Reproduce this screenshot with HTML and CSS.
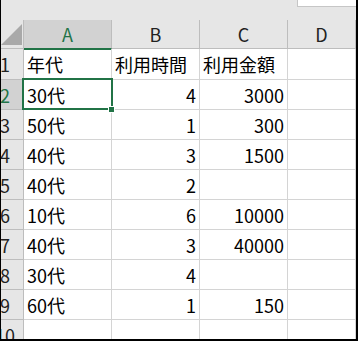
FILE: index.html
```html
<!DOCTYPE html>
<html lang="ja">
<head>
  <meta charset="UTF-8">
  <meta name="viewport" content="width=device-width, initial-scale=1.0">
  <title>利用データ</title>
  <link rel="stylesheet" href="styles.css">
</head>
<body>
  <div class="sheet">
    <div class="toolbar">
      <div class="namebox"></div>
    </div>
    <div class="grid">
      <div class="corner"><span class="corner-mark"></span></div>
      <div class="col-head is-active">A</div>
      <div class="col-head">B</div>
      <div class="col-head">C</div>
      <div class="col-head">D</div>

      <div class="row-head">1</div>
      <div class="cell">年代</div>
      <div class="cell">利用時間</div>
      <div class="cell">利用金額</div>
      <div class="cell"></div>

      <div class="row-head is-active">2</div>
      <div class="cell is-selected">30代</div>
      <div class="cell num">4</div>
      <div class="cell num">3000</div>
      <div class="cell"></div>

      <div class="row-head">3</div>
      <div class="cell">50代</div>
      <div class="cell num">1</div>
      <div class="cell num">300</div>
      <div class="cell"></div>

      <div class="row-head">4</div>
      <div class="cell">40代</div>
      <div class="cell num">3</div>
      <div class="cell num">1500</div>
      <div class="cell"></div>

      <div class="row-head">5</div>
      <div class="cell">40代</div>
      <div class="cell num">2</div>
      <div class="cell num"></div>
      <div class="cell"></div>

      <div class="row-head">6</div>
      <div class="cell">10代</div>
      <div class="cell num">6</div>
      <div class="cell num">10000</div>
      <div class="cell"></div>

      <div class="row-head">7</div>
      <div class="cell">40代</div>
      <div class="cell num">3</div>
      <div class="cell num">40000</div>
      <div class="cell"></div>

      <div class="row-head">8</div>
      <div class="cell">30代</div>
      <div class="cell num">4</div>
      <div class="cell num"></div>
      <div class="cell"></div>

      <div class="row-head">9</div>
      <div class="cell">60代</div>
      <div class="cell num">1</div>
      <div class="cell num">150</div>
      <div class="cell"></div>

      <div class="row-head">10</div>
      <div class="cell"></div>
      <div class="cell"></div>
      <div class="cell"></div>
      <div class="cell"></div>
    </div>
  </div>
</body>
</html>
```

FILE: styles.css
```css
*,
*::before,
*::after {
  box-sizing: border-box;
}

body {
  margin: 0;
  font-family: "Noto Sans CJK JP", "Noto Sans", sans-serif;
  font-size: 18px;
  color: #000;
}

.sheet {
  width: 358px;
  height: 341px;
  overflow: hidden;
  background: #fff;
  border-left: 1px solid #000;
  border-right: 2px solid #000;
  border-bottom: 2px solid #000;
}

/* 上の灰色の帯 */
.toolbar {
  display: flex;
  justify-content: flex-end;
  height: 20px;
  background: #e6e6e6;
}

.namebox {
  width: 59px;
  height: 7px;
  background: #fff;
  border-left: 1px solid #c6c6c6;
  border-bottom: 1px solid #c6c6c6;
}

/* 行番号の列は左が少し切れている */
.grid {
  display: grid;
  grid-template-columns: 37px 88px 88px 88px 1fr;
  grid-template-rows: 29px 31px repeat(9, 30px);
  width: calc(100% + 14px);
  margin-left: -14px;
}

.corner,
.col-head,
.row-head {
  display: flex;
  align-items: center;
  justify-content: center;
  background: #e6e6e6;
  color: #222;
  border-right: 1px solid #bdbdbd;
  border-bottom: 1px solid #bdbdbd;
  line-height: 1;
}

.corner {
  align-items: flex-end;
  justify-content: flex-end;
  padding: 0 1px 3px 0;
}

.corner-mark {
  width: 21px;
  height: 21px;
  background: #a9a9a9;
  clip-path: polygon(100% 0, 100% 100%, 0 100%);
}

.col-head.is-active,
.row-head.is-active {
  background: #d2d2d2;
  color: #217346;
}

/* 選択中の列見出しの下の緑線 */
.col-head.is-active {
  box-shadow: 0 1px 0 #217346;
  border-bottom-color: #217346;
}

.cell {
  display: flex;
  align-items: center;
  padding: 0 3px;
  border-right: 1px solid #d4d4d4;
  border-bottom: 1px solid #d4d4d4;
  line-height: 1;
  white-space: nowrap;
}

.num {
  justify-content: flex-end;
}

.is-selected {
  position: relative;
}

.is-selected::before {
  content: "";
  position: absolute;
  left: -2px;
  top: -2px;
  width: 91px;
  height: 32px;
  border: 2px solid #217346;
}

.is-selected::after {
  content: "";
  position: absolute;
  left: 84px;
  top: 26px;
  width: 7px;
  height: 7px;
  background: #217346;
  border: 1px solid #fff;
}
```
